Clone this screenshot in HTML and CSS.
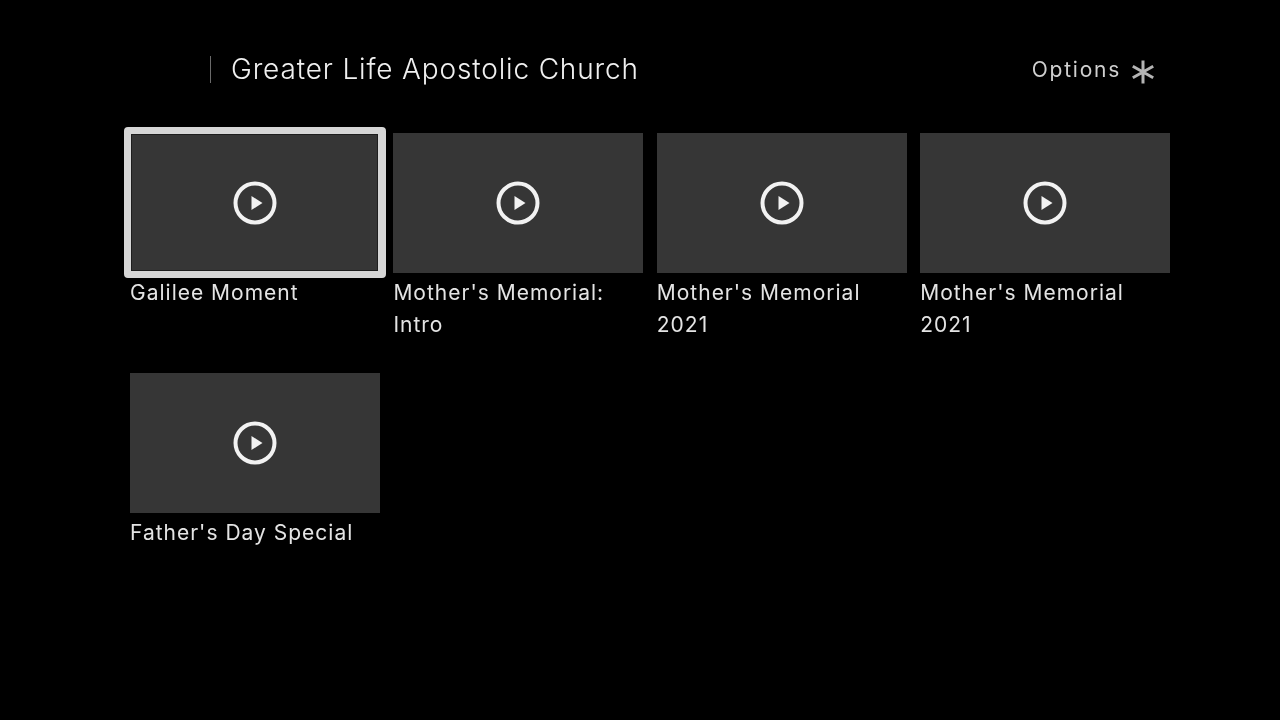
FILE: index.html
```html
<!DOCTYPE html>
<html lang="en">
<head>
<meta charset="utf-8">
<title>Greater Life Apostolic Church</title>
<link rel="stylesheet" href="styles.css">
</head>
<body>
<div class="screen">
  <header class="header">
    <div class="brand">
      <span class="divider"></span>
      <h1 class="title">Greater Life Apostolic Church</h1>
    </div>
    <div class="options">
      <span class="options-label">Options</span>
      <svg class="star" viewBox="0 0 24 24" aria-hidden="true"><path d="M12 0.5V23.5M1.8 6.2L22.2 17.8M22.2 6.2L1.8 17.8"/></svg>
    </div>
  </header>
  <main class="grid">
    <article class="card">
      <div class="thumb focused"><svg class="play" viewBox="0 0 44 44" aria-hidden="true"><circle class="ring" cx="22" cy="22" r="19.5"/><path class="tri" d="M18.500 15L29.500 22L18.500 29Z"/></svg></div>
      <p class="label">Galilee Moment</p>
    </article>
    <article class="card">
      <div class="thumb"><svg class="play" viewBox="0 0 44 44" aria-hidden="true"><circle class="ring" cx="22" cy="22" r="19.5"/><path class="tri" d="M18.500 15L29.500 22L18.500 29Z"/></svg></div>
      <p class="label">Mother's Memorial: Intro</p>
    </article>
    <article class="card">
      <div class="thumb"><svg class="play" viewBox="0 0 44 44" aria-hidden="true"><circle class="ring" cx="22" cy="22" r="19.5"/><path class="tri" d="M18.500 15L29.500 22L18.500 29Z"/></svg></div>
      <p class="label">Mother's Memorial 2021</p>
    </article>
    <article class="card">
      <div class="thumb"><svg class="play" viewBox="0 0 44 44" aria-hidden="true"><circle class="ring" cx="22" cy="22" r="19.5"/><path class="tri" d="M18.500 15L29.500 22L18.500 29Z"/></svg></div>
      <p class="label">Mother's Memorial 2021</p>
    </article>
    <article class="card">
      <div class="thumb"><svg class="play" viewBox="0 0 44 44" aria-hidden="true"><circle class="ring" cx="22" cy="22" r="19.5"/><path class="tri" d="M18.500 15L29.500 22L18.500 29Z"/></svg></div>
      <p class="label">Father's Day Special</p>
    </article>
  </main>
</div>
</body>
</html>
```
FILE: styles.css
```css
* { box-sizing: border-box; }
html, body { margin: 0; padding: 0; background: #000; }
.screen {
  width: 1280px;
  height: 720px;
  overflow: hidden;
  background: #000;
  color: #e6e6e6;
  font-family: "Inter", "Liberation Sans", sans-serif;
  padding: 55px 110px 0 130px;
  filter: blur(0.35px);
}
.header {
  display: flex;
  justify-content: space-between;
  align-items: center;
  height: 28px;
}
.brand {
  display: flex;
  align-items: center;
  padding-left: 80px;
}
.divider {
  width: 1px;
  height: 27px;
  background: #6a6a6a;
  margin-right: 20px;
}
.title {
  margin: 0;
  font-size: 28px;
  font-weight: 300;
  line-height: 28px;
  color: #f0f0f0;
  letter-spacing: 0.85px;
}
.options {
  display: flex;
  align-items: center;
  gap: 10px;
  padding-right: 15px;
}
.options-label {
  font-size: 21px;
  font-weight: 400;
  color: #cfcfcf;
  letter-spacing: 1.75px;
}
.star {
  width: 24px;
  height: 24px;
  margin-top: 6px;
}
.star path {
  fill: none;
  stroke: #b4b4b4;
  stroke-width: 3;
}
.grid {
  display: grid;
  grid-template-columns: repeat(4, 250px);
  grid-auto-rows: 240px;
  column-gap: 13.4px;
  margin-top: 50px;
}
.thumb {
  position: relative;
  width: 250px;
  height: 140px;
  background: #363636;
  display: flex;
  align-items: center;
  justify-content: center;
}
.thumb.focused::after {
  content: "";
  position: absolute;
  inset: -6px -6px -5px -6px;
  border: 7.5px solid #d6d6d6;
  border-right-width: 8px;
  border-bottom-width: 7px;
  border-radius: 4px;
  box-shadow: inset 0 0 0 1px #1e1e1e;
}
.play {
  width: 44px;
  height: 44px;
}
.ring {
  fill: none;
  stroke: #f2f2f2;
  stroke-width: 4;
}
.tri {
  fill: #f2f2f2;
}
.label {
  margin: 4px 0 0;
  font-size: 21px;
  line-height: 32px;
  font-weight: 400;
  color: #e4e4e4;
  letter-spacing: 1px;
}
```
